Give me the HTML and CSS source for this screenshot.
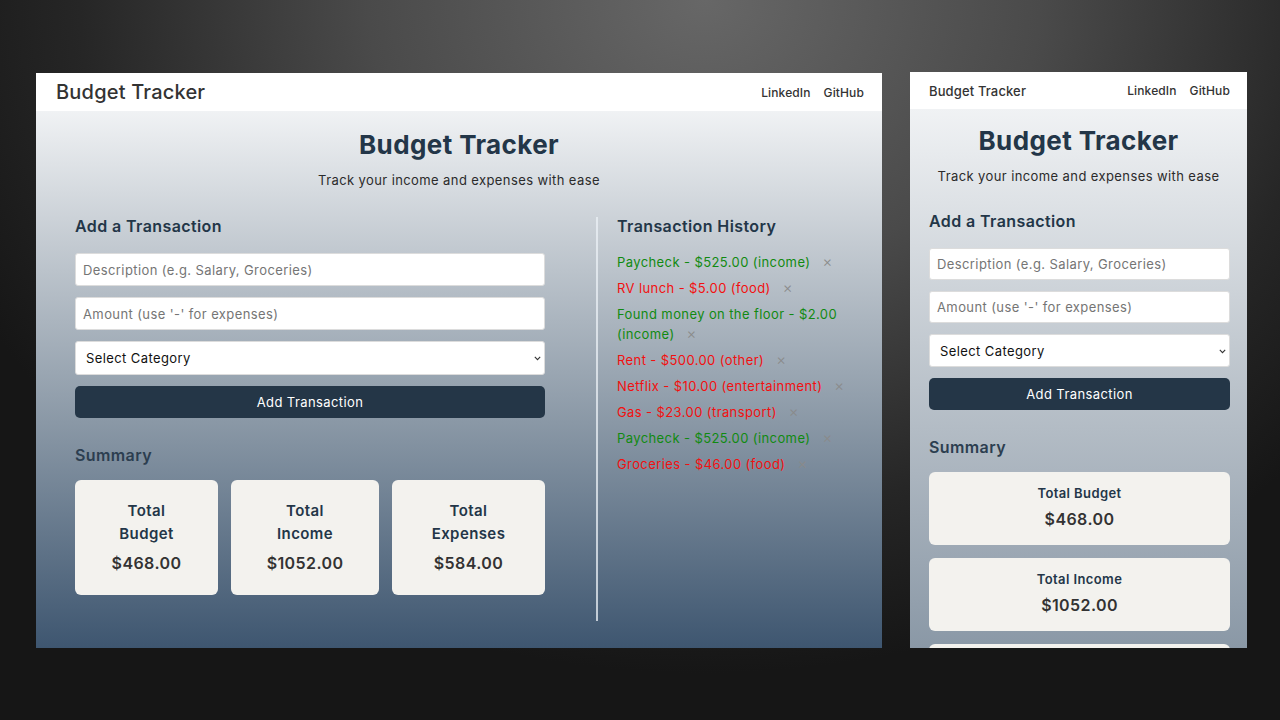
FILE: index.html
```html
<!DOCTYPE html>
<html lang="en">
<head>
<meta charset="utf-8">
<title>Budget Tracker</title>
<link rel="stylesheet" href="styles.css">
</head>
<body>
<div class="stage">
  <section class="frame desktop">
    <nav class="nav">
      <span class="brand">Budget Tracker</span>
      <div class="links"><a>LinkedIn</a><a>GitHub</a></div>
    </nav>
    <main class="main">
      <h1 class="title">Budget Tracker</h1>
      <p class="subtitle">Track your income and expenses with ease</p>
      <div class="columns">
        <div class="left">
          <h2 class="h2">Add a Transaction</h2>
          <form class="form">
            <input class="field" type="text" placeholder="Description (e.g. Salary, Groceries)">
            <input class="field" type="text" placeholder="Amount (use '-' for expenses)">
            <div class="select-wrap">
              <select class="field select"><option>Select Category</option></select>
              <svg class="chev" width="7" height="5" viewBox="0 0 7 5"><path d="M0.8 0.8 L3.5 3.6 L6.2 0.8" fill="none" stroke="#333" stroke-width="1.1"/></svg>
            </div>
            <button class="btn" type="button">Add Transaction</button>
          </form>
          <h2 class="h2 summary-h">Summary</h2>
          <div class="cards">
            <div class="card"><div class="card-t">Total<br>Budget</div><div class="card-v">$468.00</div></div>
            <div class="card"><div class="card-t">Total<br>Income</div><div class="card-v">$1052.00</div></div>
            <div class="card"><div class="card-t">Total<br>Expenses</div><div class="card-v">$584.00</div></div>
          </div>
        </div>
        <div class="right">
          <h2 class="h2">Transaction History</h2>
          <ul class="list">
            <li class="inc">Paycheck - $525.00 (income)<span class="x">×</span></li>
            <li class="exp">RV lunch - $5.00 (food)<span class="x">×</span></li>
            <li class="inc">Found money on the floor - $2.00 (income)<span class="x">×</span></li>
            <li class="exp">Rent - $500.00 (other)<span class="x">×</span></li>
            <li class="exp">Netflix - $10.00 (entertainment)<span class="x">×</span></li>
            <li class="exp">Gas - $23.00 (transport)<span class="x">×</span></li>
            <li class="inc">Paycheck - $525.00 (income)<span class="x">×</span></li>
            <li class="exp">Groceries - $46.00 (food)<span class="x">×</span></li>
          </ul>
        </div>
      </div>
    </main>
  </section>

  <section class="frame mobile">
    <nav class="nav m-nav">
      <span class="brand m-brand">Budget Tracker</span>
      <div class="links"><a>LinkedIn</a><a>GitHub</a></div>
    </nav>
    <main class="main m-main">
      <h1 class="title m-title">Budget Tracker</h1>
      <p class="subtitle">Track your income and expenses with ease</p>
      <div class="m-col">
        <h2 class="h2">Add a Transaction</h2>
        <form class="form">
          <input class="field m-field" type="text" placeholder="Description (e.g. Salary, Groceries)">
          <input class="field m-field" type="text" placeholder="Amount (use '-' for expenses)">
          <div class="select-wrap">
            <select class="field select m-select"><option>Select Category</option></select>
            <svg class="chev" width="7" height="5" viewBox="0 0 7 5"><path d="M0.8 0.8 L3.5 3.6 L6.2 0.8" fill="none" stroke="#333" stroke-width="1.1"/></svg>
          </div>
          <button class="btn" type="button">Add Transaction</button>
        </form>
        <h2 class="h2 summary-h">Summary</h2>
        <div class="m-cards">
          <div class="card m-card"><div class="card-t m-card-t">Total Budget</div><div class="card-v">$468.00</div></div>
          <div class="card m-card"><div class="card-t m-card-t">Total Income</div><div class="card-v">$1052.00</div></div>
          <div class="card m-card"><div class="card-t m-card-t">Total Expenses</div><div class="card-v">$584.00</div></div>
        </div>
        <div class="m-history">
          <h2 class="h2">Transaction History</h2>
          <ul class="list">
            <li class="inc">Paycheck - $525.00 (income)<span class="x">×</span></li>
            <li class="exp">RV lunch - $5.00 (food)<span class="x">×</span></li>
            <li class="inc">Found money on the floor - $2.00 (income)<span class="x">×</span></li>
            <li class="exp">Rent - $500.00 (other)<span class="x">×</span></li>
          </ul>
        </div>
      </div>
    </main>
  </section>
</div>
</body>
</html>
```

FILE: styles.css
```css
* { box-sizing: border-box; }
html, body { margin: 0; padding: 0; }
body {
  width: 1280px;
  height: 720px;
  overflow: hidden;
  font-family: Inter, "Open Sans", sans-serif;
  letter-spacing: 0.025em;
  background: radial-gradient(ellipse 75% 110% at 55% 0%, #676767 0%, #4a4a4a 35%, #262626 65%, #161616 85%);
}
.stage {
  display: flex;
  align-items: flex-start;
  gap: 28px;
  padding: 72px 0 0 36px;
}
.frame {
  background: #fff;
  overflow: hidden;
  display: flex;
  flex-direction: column;
}
.desktop { width: 846px; height: 575px; margin-top: 1px; }
.mobile { width: 337px; height: 576px; }

.nav {
  height: 38px;
  flex: none;
  display: flex;
  align-items: center;
  justify-content: space-between;
  padding: 0 18px 0 20px;
  background: #fff;
}
.brand { font-size: 20px; font-weight: 500; color: #333; letter-spacing: 0.01em; }
.links { display: flex; gap: 13px; }
.links a { font-size: 12px; font-weight: 500; color: #333; letter-spacing: 0.01em; }

.main {
  flex: 1;
  background: linear-gradient(180deg, #f0f2f4 0%, #c3cad1 25%, #8a98a6 58%, #3e5670 100%);
  padding: 18px 0 0;
}
.title {
  margin: 0;
  text-align: center;
  font-size: 26px;
  line-height: 31px;
  font-weight: 700;
  color: #233648;
}
.subtitle {
  margin: 10px 0 0;
  text-align: center;
  font-size: 13px;
  line-height: 20px;
  color: #2b2b2b;
}
.columns {
  display: grid;
  grid-template-columns: 470px 268px;
  column-gap: 51px;
  margin-top: 27px;
  padding-left: 39px;
}
.left { padding-bottom: 26px; }
.right {
  border-left: 2px solid rgba(235, 240, 245, 0.75);
  padding-left: 19px;
}
.h2 {
  margin: 0;
  font-size: 16px;
  line-height: 19px;
  font-weight: 600;
  color: #233648;
}
.form {
  display: flex;
  flex-direction: column;
  gap: 11px;
  margin-top: 17px;
}
.field {
  height: 33px;
  width: 100%;
  border: 1px solid #dcdcdc;
  border-radius: 3px;
  background: #fff;
  padding: 0 7px;
  font-family: inherit;
  letter-spacing: inherit;
  font-size: 13px;
  color: #000;
  outline: none;
}
.field::placeholder { color: #757575; }
.select-wrap { position: relative; }
.select {
  display: block;
  height: 34px;
  padding: 0 10px;
  appearance: none;
  -webkit-appearance: none;
  color: #111;
}
.chev { position: absolute; right: 4px; top: 15px; }
.btn {
  height: 32px;
  border: none;
  border-radius: 5px;
  background: #243647;
  color: #fff;
  font-family: inherit;
  letter-spacing: inherit;
  font-size: 13px;
}
.summary-h { margin-top: 28px; color: #2c3e50; }
.cards {
  display: grid;
  grid-template-columns: 143px 148px 153px;
  column-gap: 13px;
  margin-top: 15px;
}
.card {
  background: #f3f2ee;
  border-radius: 6px;
  text-align: center;
  padding: 19px 8px 20px;
}
.card-t { font-size: 15px; line-height: 23px; font-weight: 600; color: #233648; }
.card-v { margin-top: 7px; font-size: 16px; line-height: 23px; font-weight: 600; color: #333; }

.list { list-style: none; margin: 16px 0 0; padding: 0; display: flex; flex-direction: column; gap: 6px; }
.list li { font-size: 13px; line-height: 20px; }
.inc { color: #118a11; }
.exp { color: #f21010; }
.x { color: #8a8a8a; margin-left: 12px; font-size: 15px; font-weight: 300; }

/* mobile */
.m-nav { height: 37px; padding: 0 17px 0 19px; }
.m-brand { font-size: 13px; }
.m-main { flex: none; height: 930px; padding-top: 16px; }
.m-col { padding: 0 17px 0 19px; margin-top: 26px; }
.m-field { height: 32px; }
.m-select { height: 33px; }
.m-cards { display: flex; flex-direction: column; gap: 13px; margin-top: 15px; }
.m-card { padding: 11px 8px 12px; height: 73px; }
.m-card-t { font-size: 13px; line-height: 20px; }
.m-card .card-v { margin-top: 5px; }
.m-history { margin-top: 30px; padding-top: 20px; border-top: 2px solid rgba(235,240,245,0.6); }
```
